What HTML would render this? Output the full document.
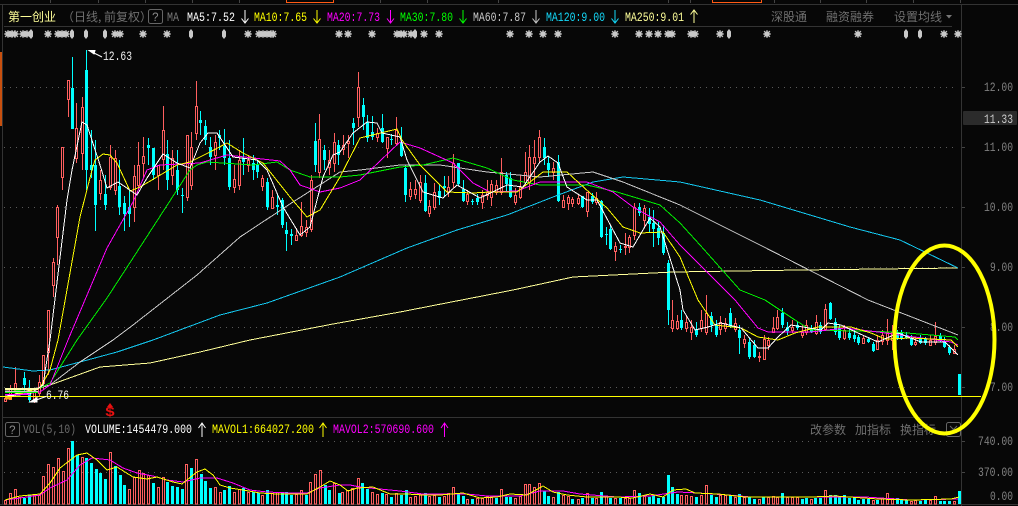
<!DOCTYPE html>
<html><head><meta charset="utf-8"><style>
html,body{margin:0;padding:0;background:#070707;width:1018px;height:506px;overflow:hidden}
svg{display:block}
text{font-family:"Liberation Mono",monospace;font-size:13px}
.c{font-family:"WenQuanYi Zen Hei","Noto Sans CJK SC",sans-serif;font-size:12px;fill:#6f6f6f}
.ax{fill:#808080}
</style></head><body>
<svg width="1018" height="506" viewBox="0 0 1018 506" xmlns="http://www.w3.org/2000/svg">
<defs>
<g id="s"><path d="M-4 0H4M0-4V4M-3-3L3 3M-3 3L3-3" stroke="#c8c8c8" fill="none"/><circle r="2.8" fill="#c8c8c8"/></g>
<g id="d"><path d="M0-5L2-2.5V2.5L0 5L-2 2.5V-2.5z" fill="#c8c8c8"/></g>
</defs>
<rect width="1018" height="506" fill="#070707"/>
<g shape-rendering="crispEdges">
<path d="M0 4.5H1018M4 26.5H952M2 417.5H961M0 504.5H1018" stroke="#333" fill="none"/>
<path d="M50.5 0V3M98.5 0V3M145.5 0V3M192.5 0V3M239.5 0V3M380.5 0V3M427.5 0V3M498.5 0V3M668.5 0V3M690.5 0V3M774.5 0V3M820.5 0V3M866.5 0V3M913.5 0V3M960.5 0V3" stroke="#444"/>
<path d="M286.5 0V2.5H333.5V0M712.5 0V2.5H761.5V0" stroke="#ff5a14" fill="none"/>
<path d="M961.5 4V506M2.5 4V504" stroke="#333"/>
<rect x="0" y="52" width="2" height="74" fill="#c8500f"/>
<path d="M4 87.5H958M4 147.5H958M4 207.5H958M4 267.5H958M4 327.5H958M4 387.5H958M4 441.5H958M4 472.5H958" stroke="#5a5a5a" stroke-dasharray="1 5"/>
<path d="M962 87.5H965M962 147.5H965M962 207.5H965M962 267.5H965M962 327.5H965M962 387.5H965M962 441.5H965M962 472.5H965" stroke="#444"/>

<!-- volume cyan -->
<path stroke="#0ff" stroke-width="3" fill="none" d="M24.5 498V504M29.5 495V504M72.5 441V504M77.5 455V504M86.5 458V504M91.5 463V504M96.5 469V504M100.5 473V504M105.5 479V504M115.5 466V504M120.5 475V504M124.5 485V504M153.5 483V504M167.5 482V504M172.5 486V504M177.5 487V504M182.5 489V504M191.5 468V504M201.5 474V504M205.5 481V504M210.5 488V504M224.5 490V504M229.5 486V504M243.5 488V504M253.5 492V504M258.5 493V504M267.5 490V504M282.5 493V504M286.5 492V504M291.5 495V504M306.5 495V504M325.5 485V504M329.5 490V504M339.5 493V504M362.5 483V504M367.5 489V504M382.5 493V504M391.5 497V504M401.5 495V504M406.5 490V504M425.5 493V504M439.5 497V504M458.5 494V504M463.5 496V504M472.5 499V504M496.5 498V504M506.5 497V504M510.5 497V504M544.5 491V504M548.5 496V504M558.5 492V504M572.5 499V504M582.5 498V504M592.5 498V504M601.5 492V504M610.5 498V504M620.5 498V504M639.5 493V504M649.5 497V504M653.5 495V504M658.5 498V504M663.5 497V504M668.5 475V504M672.5 487V504M677.5 494V504M696.5 497V504M711.5 495V504M716.5 497V504M730.5 495V504M739.5 494V504M749.5 497V504M754.5 499V504M763.5 497V504M782.5 493V504M802.5 499V504M806.5 498V504M815.5 498V504M820.5 498V504M830.5 495V504M835.5 495V504M839.5 497V504M844.5 495V504M849.5 498V504M854.5 498V504M858.5 500V504M863.5 499V504M868.5 499V504M877.5 500V504M897.5 498V504M901.5 500V504M906.5 500V504M920.5 501V504M925.5 500V504M940.5 501V504M944.5 501V504M949.5 501V504M959.5 491V504"/>
<!-- volume red -->
<path stroke="#ff5f5f" fill="none" d="M4.5 500.5h2V504h-2zM9.5 493.5h2V504h-2zM14.5 489.5h2V504h-2zM18.5 497.5h2V504h-2zM33.5 495.5h2V504h-2zM38.5 495.5h2V504h-2zM42.5 476.5h2V504h-2zM47.5 464.5h2V504h-2zM52.5 467.5h2V504h-2zM57.5 458.5h2V504h-2zM62.5 471.5h2V504h-2zM67.5 448.5h2V504h-2zM81.5 457.5h2V504h-2zM109.5 452.5h2V504h-2zM128.5 489.5h2V504h-2zM133.5 477.5h2V504h-2zM138.5 470.5h2V504h-2zM142.5 473.5h2V504h-2zM147.5 475.5h2V504h-2zM157.5 487.5h2V504h-2zM162.5 477.5h2V504h-2zM185.5 464.5h2V504h-2zM195.5 459.5h2V504h-2zM214.5 487.5h2V504h-2zM219.5 492.5h2V504h-2zM233.5 492.5h2V504h-2zM238.5 489.5h2V504h-2zM247.5 492.5h2V504h-2zM261.5 495.5h2V504h-2zM271.5 493.5h2V504h-2zM276.5 492.5h2V504h-2zM295.5 494.5h2V504h-2zM300.5 490.5h2V504h-2zM309.5 482.5h2V504h-2zM314.5 474.5h2V504h-2zM319.5 470.5h2V504h-2zM333.5 483.5h2V504h-2zM341.5 492.5h2V504h-2zM346.5 490.5h2V504h-2zM351.5 488.5h2V504h-2zM357.5 478.5h2V504h-2zM371.5 492.5h2V504h-2zM376.5 494.5h2V504h-2zM385.5 494.5h2V504h-2zM395.5 493.5h2V504h-2zM409.5 497.5h2V504h-2zM414.5 496.5h2V504h-2zM419.5 494.5h2V504h-2zM428.5 496.5h2V504h-2zM433.5 495.5h2V504h-2zM443.5 496.5h2V504h-2zM447.5 493.5h2V504h-2zM452.5 487.5h2V504h-2zM466.5 499.5h2V504h-2zM476.5 498.5h2V504h-2zM481.5 498.5h2V504h-2zM486.5 496.5h2V504h-2zM490.5 496.5h2V504h-2zM500.5 489.5h2V504h-2zM514.5 498.5h2V504h-2zM519.5 496.5h2V504h-2zM524.5 484.5h2V504h-2zM528.5 484.5h2V504h-2zM533.5 487.5h2V504h-2zM538.5 483.5h2V504h-2zM552.5 497.5h2V504h-2zM562.5 495.5h2V504h-2zM567.5 496.5h2V504h-2zM577.5 499.5h2V504h-2zM586.5 493.5h2V504h-2zM595.5 498.5h2V504h-2zM605.5 496.5h2V504h-2zM614.5 498.5h2V504h-2zM624.5 498.5h2V504h-2zM628.5 498.5h2V504h-2zM633.5 490.5h2V504h-2zM643.5 496.5h2V504h-2zM680.5 495.5h2V504h-2zM685.5 495.5h2V504h-2zM690.5 496.5h2V504h-2zM700.5 495.5h2V504h-2zM705.5 485.5h2V504h-2zM719.5 495.5h2V504h-2zM724.5 495.5h2V504h-2zM734.5 497.5h2V504h-2zM743.5 497.5h2V504h-2zM758.5 499.5h2V504h-2zM767.5 497.5h2V504h-2zM772.5 496.5h2V504h-2zM776.5 497.5h2V504h-2zM786.5 497.5h2V504h-2zM791.5 497.5h2V504h-2zM796.5 497.5h2V504h-2zM810.5 499.5h2V504h-2zM824.5 490.5h2V504h-2zM872.5 500.5h2V504h-2zM881.5 498.5h2V504h-2zM886.5 493.5h2V504h-2zM891.5 498.5h2V504h-2zM910.5 501.5h2V504h-2zM914.5 500.5h2V504h-2zM929.5 500.5h2V504h-2zM934.5 496.5h2V504h-2zM953.5 501.5h2V504h-2z"/>

<!-- candle wicks: red -->
<path stroke="#ff5f5f" fill="none" d="M5.5 397V402M10.5 385V400M15.5 367V396M34.5 388V403M39.5 375V396M43.5 355V390M48.5 310V375M53.5 258V297M57.5 205V265M62.5 147V190M68.5 80V117M76.5 103V163M82.5 97V170M100.5 170V200M110.5 145V190M115.5 150V195M134.5 165V222M138.5 142V190M143.5 137V178M158.5 165V190M163.5 106V170M172.5 150V185M187.5 135V201M191.5 132V190M196.5 81V140M215.5 135V170M234.5 165V193M239.5 150V190M248.5 155V172M262.5 175V191M272.5 190V209M296.5 228V241M301.5 202V237M306.5 220V237M311.5 175V232M319.5 114V178M329.5 150V175M334.5 133V172M343.5 135V155M348.5 135V158M358.5 72V127M377.5 128V142M387.5 137V158M396.5 117V145M410.5 182V200M415.5 180V199M420.5 175V203M429.5 200V217M434.5 183V210M448.5 176V197M453.5 154V188M467.5 190V205M482.5 190V209M487.5 180V200M491.5 180V206M496.5 180V195M501.5 158V195M515.5 188V205M520.5 175V199M525.5 152V185M529.5 145V190M534.5 140V185M539.5 130V163M553.5 162V180M563.5 195V208M568.5 195V210M572.5 197V207M578.5 195V205M587.5 192V217M596.5 192V205M615.5 242V261M625.5 233V255M629.5 235V253M634.5 203V240M644.5 205V228M672.5 300V332M677.5 315V330M686.5 315V332M691.5 320V340M701.5 310V332M706.5 295V335M720.5 316V335M725.5 318V332M735.5 318V332M744.5 335V348M759.5 352V362M764.5 335V360M768.5 337V350M773.5 317V333M777.5 310V330M792.5 320V333M802.5 325V338M806.5 320V335M816.5 315V335M825.5 304V331M844.5 325V340M863.5 335V344M877.5 335V350M882.5 330V345M887.5 319V345M892.5 325V350M915.5 337V346M930.5 335V346M935.5 322V345M954.5 345V353"/>
<!-- candle bodies: red -->
<path stroke="#ff5f5f" fill="#070707" d="M4.5 398.5h2v3h-2zM9.5 388.5h2v11h-2zM14.5 383.5h2v7h-2zM33.5 392.5h2v7h-2zM38.5 382.5h2v11h-2zM42.5 355.5h2v28h-2zM47.5 310.5h2v42h-2zM52.5 262.5h2v23h-2zM56.5 207.5h2v30h-2zM61.5 147.5h2v30h-2zM67.5 80.5h2v19h-2zM75.5 128.5h2v30h-2zM81.5 107.5h2v46h-2zM99.5 180.5h2v13h-2zM109.5 157.5h2v30h-2zM114.5 158.5h2v32h-2zM133.5 176.5h2v31h-2zM137.5 165.5h2v20h-2zM142.5 156.5h2v7h-2zM157.5 165.5h2v10h-2zM162.5 130.5h2v29h-2zM171.5 158.5h2v17h-2zM186.5 135.5h2v62h-2zM190.5 147.5h2v38h-2zM195.5 106.5h2v27h-2zM214.5 142.5h2v13h-2zM233.5 179.5h2v8h-2zM238.5 160.5h2v25h-2zM247.5 160.5h2v5h-2zM261.5 178.5h2v8h-2zM271.5 197.5h2v11h-2zM295.5 235.5h2v5h-2zM300.5 226.5h2v9h-2zM305.5 227.5h2v5h-2zM310.5 180.5h2v49h-2zM318.5 139.5h2v33h-2zM328.5 160.5h2v7h-2zM333.5 142.5h2v21h-2zM342.5 145.5h2v4h-2zM347.5 141.5h2v2h-2zM357.5 87.5h2v30h-2zM376.5 133.5h2v4h-2zM386.5 137.5h2v11h-2zM395.5 130.5h2v13h-2zM409.5 189.5h2v7h-2zM414.5 189.5h2v5h-2zM419.5 182.5h2v18h-2zM428.5 206.5h2v7h-2zM433.5 192.5h2v15h-2zM447.5 187.5h2v5h-2zM452.5 163.5h2v19h-2zM466.5 194.5h2v7h-2zM481.5 195.5h2v7h-2zM486.5 192.5h2v3h-2zM490.5 184.5h2v13h-2zM495.5 185.5h2v7h-2zM500.5 172.5h2v20h-2zM514.5 195.5h2v7h-2zM519.5 187.5h2v10h-2zM524.5 172.5h2v10h-2zM528.5 157.5h2v25h-2zM533.5 157.5h2v6h-2zM538.5 137.5h2v20h-2zM552.5 168.5h2v4h-2zM562.5 200.5h2v7h-2zM567.5 197.5h2v6h-2zM571.5 199.5h2v4h-2zM577.5 198.5h2v5h-2zM586.5 192.5h2v19h-2zM595.5 198.5h2v4h-2zM614.5 246.5h2v5h-2zM624.5 246.5h2v1h-2zM628.5 237.5h2v10h-2zM633.5 207.5h2v28h-2zM643.5 208.5h2v12h-2zM671.5 320.5h2v8h-2zM676.5 321.5h2v7h-2zM685.5 322.5h2v6h-2zM690.5 327.5h2v5h-2zM700.5 320.5h2v8h-2zM705.5 313.5h2v19h-2zM719.5 322.5h2v7h-2zM724.5 323.5h2v5h-2zM734.5 323.5h2v6h-2zM743.5 339.5h2v4h-2zM758.5 356.5h2v1h-2zM763.5 339.5h2v20h-2zM767.5 340.5h2v5h-2zM772.5 328.5h2v4h-2zM776.5 317.5h2v11h-2zM791.5 327.5h2v3h-2zM801.5 332.5h2v3h-2zM805.5 325.5h2v7h-2zM815.5 322.5h2v11h-2zM824.5 309.5h2v20h-2zM843.5 330.5h2v8h-2zM862.5 338.5h2v5h-2zM876.5 340.5h2v9h-2zM881.5 335.5h2v6h-2zM886.5 332.5h2v8h-2zM891.5 332.5h2v8h-2zM914.5 342.5h2v2h-2zM929.5 340.5h2v5h-2zM934.5 336.5h2v6h-2zM953.5 349.5h2v4h-2z"/>
<!-- cyan wicks -->
<path stroke="#0ff" fill="none" d="M24.5 372V395M29.5 380V402M72.5 57V129M86.5 50V190M91.5 130V178M95.5 140V231M105.5 175V210M119.5 160V215M124.5 196V231M129.5 190V227M148.5 138V165M153.5 148V180M167.5 140V190M177.5 150V195M182.5 188V213M200.5 111V135M205.5 120V145M210.5 137V165M219.5 130V150M224.5 129V165M229.5 140V190M243.5 138V175M253.5 155V180M257.5 160V178M267.5 178V210M277.5 195V215M282.5 198V228M286.5 222V251M291.5 229V245M315.5 123V172M324.5 145V170M338.5 140V165M353.5 118V145M363.5 98V130M367.5 115V142M372.5 116V140M382.5 114V143M391.5 134V145M401.5 127V157M405.5 165V202M425.5 175V212M439.5 185V205M444.5 176V197M458.5 163V186M463.5 180V202M472.5 199V205M477.5 194V205M506.5 172V192M510.5 172V198M544.5 138V165M548.5 157V177M558.5 155V202M582.5 196V208M592.5 193V204M601.5 200V238M606.5 227V245M610.5 225V250M620.5 245V253M639.5 203V216M649.5 208V233M653.5 210V247M658.5 222V245M663.5 225V255M668.5 260V325M681.5 310V330M696.5 322V337M711.5 312V332M716.5 320V337M730.5 308V328M739.5 325V354M749.5 338V359M754.5 340V358M782.5 308V328M787.5 322V335M797.5 322V330M811.5 325V333M820.5 322V334M830.5 302V320M835.5 318V335M839.5 325V340M849.5 328V340M854.5 330V342M858.5 335V345M868.5 337V343M873.5 342V352M897.5 330V340M901.5 330V340M906.5 332V339M911.5 335V346M920.5 335V344M925.5 337V345M940.5 333V342M944.5 337V348M949.5 345V355"/>
<!-- cyan bodies -->
<path stroke="#0ff" stroke-width="3" fill="none" d="M24.5 378V385M29.5 390V400M72.5 88V129M86.5 70V170M91.5 165V170M95.5 165V205M105.5 194V205M119.5 186V207M124.5 203V214M129.5 207V214M148.5 145V148M153.5 148V175M167.5 154V180M177.5 170V190M182.5 195V196M200.5 120V123M205.5 126V140M210.5 147V157M219.5 135V138M224.5 146V158M229.5 158V187M243.5 158V162M253.5 163V170M257.5 165V172M267.5 182V207M277.5 205V207M282.5 200V225M286.5 230V234M291.5 234V236M315.5 141V165M324.5 150V160M338.5 145V155M353.5 123V128M363.5 105V117M367.5 122V138M372.5 132V137M382.5 128V142M391.5 139V140M401.5 142V156M405.5 168V195M425.5 183V211M439.5 191V198M444.5 186V188M458.5 163V184M463.5 189V201M472.5 201V202M477.5 198V202M506.5 175V184M510.5 178V197M544.5 147V158M548.5 163V170M558.5 162V201M582.5 196V207M592.5 196V202M601.5 201V237M606.5 234V235M610.5 229V249M620.5 249V250M639.5 207V213M649.5 217V224M653.5 223V229M658.5 228V238M663.5 233V253M668.5 263V310M681.5 320V328M696.5 329V335M711.5 316V325M716.5 325V335M730.5 313V327M739.5 330V338M749.5 342V357M754.5 345V357M782.5 313V325M787.5 327V331M797.5 325V328M811.5 328V332M820.5 325V332M830.5 303V319M835.5 322V332M839.5 328V338M849.5 333V338M854.5 335V339M858.5 337V343M868.5 339V342M873.5 344V351M897.5 332V339M901.5 333V338M906.5 335V338M911.5 338V345M920.5 338V343M925.5 339V343M940.5 336V339M944.5 341V347M949.5 347V353M959.5 374V395"/>

<!-- MAs -->
<g fill="none">
<polyline stroke="#ffff99" points="5,399 15,394 50,385 100,367 150,363 200,352 250,340 333,324 400,312 513,290 573,277 673,272 800,270 958,268"/>
<polyline stroke="#14c8f0" points="3,367 33,371 50,370 80,362 117,352 153,340 220,315 267,303 340,277 407,248 457,230 507,215 553,197 593,182 623,177 680,182 760,200 850,227 900,240 958,268"/>
<polyline stroke="#c8c8c8" points="5,390 40,388 50,385 80,362 113,340 133,325 197,275 240,237 293,202 340,172 360,170 400,165 440,165 487,172 540,177 593,172 623,182 680,205 760,245 868,300 958,335"/>
<polyline stroke="#00f000" points="5,392 40,388 50,383 77,340 107,298 133,258 177,190 190,170 197,165 207,162 253,165 277,162 290,170 310,177 340,177 360,175 400,167 423,165 453,158 487,168 513,180 540,185 587,185 617,192 660,205 680,223 700,245 740,290 765,300 795,320 811,330 895,332 955,337 958,340"/>
<polyline stroke="#f0f" points="5,396 40,392 50,385 68,340 107,248 133,202 147,170 160,165 200,163 227,155 280,161 290,170 300,185 320,192 340,188 360,180 400,142 420,148 453,163 473,183 490,192 517,191 540,182 587,182 613,192 633,207 660,222 680,245 735,300 758,328 768,332 811,332 845,328 878,332 951,342 958,345"/>
<polyline stroke="#ff0" points="5,398 40,388 50,370 58,340 80,217 92,170 95,160 103,154 110,155 117,163 130,191 140,187 157,177 177,165 190,162 210,152 227,143 243,153 263,163 290,197 307,217 320,210 340,177 360,138 397,129 402,140 420,165 447,192 473,193 490,192 517,192 543,172 567,172 590,193 607,208 623,227 640,233 663,232 680,257 698,300 715,325 741,328 758,337 778,340 795,333 818,327 851,327 871,333 885,339 911,338 951,340 958,347"/>
<polyline stroke="#fff" points="5,396 30,394 43,385 50,340 67,200 72,170 82,122 87,125 100,165 107,188 118,182 137,195 147,178 163,154 177,163 190,168 200,143 208,133 217,133 233,157 257,160 267,170 283,207 300,235 310,227 323,177 333,155 340,152 353,133 367,122 377,123 382,133 400,137 407,160 423,192 443,198 457,185 480,198 507,185 523,187 540,162 548,156 558,163 567,187 587,200 597,200 620,243 633,247 650,218 660,227 680,290 683,310 695,330 708,327 721,323 741,328 758,348 768,348 778,337 791,325 821,330 828,323 841,325 858,333 878,342 898,333 921,342 945,342 958,355"/>
<polyline stroke="#f0f" points="5,500 20,498 40,495 50,488 67,480 80,465 92,458 110,460 123,468 137,473 153,476 167,480 183,482 200,478 217,478 233,483 250,490 267,492 290,493 307,493 320,488 340,485 350,485 360,487 380,489 400,491 423,494 467,494 487,496 520,496 540,491 563,491 580,494 617,497 650,496 678,492 698,493 728,495 751,497 811,497 865,497 911,500 958,499"/>
<polyline stroke="#ff0" points="5,500 20,496 40,494 50,483 60,468 77,455 87,453 97,460 107,470 117,467 133,477 147,479 157,477 173,482 182,484 197,472 205,469 213,475 220,485 230,488 243,490 260,493 277,494 307,494 320,487 330,481 340,485 348,491 357,488 373,487 390,494 407,494 423,495 440,495 463,493 480,498 497,497 510,494 527,495 543,486 553,492 567,495 587,497 617,497 633,498 650,494 663,497 673,490 686,489 695,493 718,494 745,497 778,497 811,497 835,496 878,499 911,500 951,499 959,497"/>
</g>
<!-- start cluster -->
<path fill="none" d="M5 389H38" stroke="#ffffaa" stroke-width="2"/>
<path fill="none" d="M5 391.500H38" stroke="#c8c8c8"/>
<path fill="none" d="M5 392.500H38" stroke="#0f0"/>
<path fill="none" d="M5 394.500H30" stroke="#f0f"/>
<path fill="none" d="M5 398H12" stroke="#ffa020" stroke-width="3"/>
<!-- low line -->
<path d="M0 396.500H981" stroke="#ff0"/>
</g>

<!-- markers -->
<g>
<use href="#s" x="8" y="34"/><use href="#s" x="12" y="34"/><use href="#s" x="15" y="34"/><use href="#s" x="23" y="34"/><use href="#s" x="27" y="34"/><use href="#d" x="31" y="34"/><use href="#s" x="48" y="34"/><use href="#s" x="58" y="34"/><use href="#s" x="62" y="34"/><use href="#s" x="66" y="34"/><use href="#d" x="72" y="34"/><use href="#d" x="86" y="34"/><use href="#d" x="105" y="34"/><use href="#s" x="115" y="34"/><use href="#s" x="120" y="34"/><use href="#s" x="143" y="34"/><use href="#s" x="167" y="34"/><use href="#d" x="191" y="34"/><use href="#d" x="224" y="34"/><use href="#s" x="248" y="34"/><use href="#s" x="259" y="34"/><use href="#s" x="263" y="34"/><use href="#s" x="267" y="34"/><use href="#s" x="271" y="34"/><use href="#s" x="273" y="34"/><use href="#s" x="339" y="34"/><use href="#s" x="348" y="34"/><use href="#s" x="372" y="34"/><use href="#s" x="397" y="34"/><use href="#s" x="401" y="34"/><use href="#s" x="404" y="34"/><use href="#s" x="411" y="34"/><use href="#d" x="415" y="34"/><use href="#s" x="424" y="34"/><use href="#s" x="439" y="34"/><use href="#s" x="510" y="34"/><use href="#s" x="529" y="34"/><use href="#s" x="543" y="34"/><use href="#s" x="558" y="34"/><use href="#s" x="615" y="34"/><use href="#s" x="639" y="34"/><use href="#s" x="649" y="34"/><use href="#s" x="658" y="34"/><use href="#s" x="668" y="34"/><use href="#s" x="672" y="34"/><use href="#s" x="691" y="34"/><use href="#s" x="695" y="34"/><use href="#s" x="720" y="34"/><use href="#d" x="729" y="34"/><use href="#s" x="767" y="34"/><use href="#s" x="858" y="34"/><use href="#d" x="906" y="34"/><use href="#d" x="920" y="34"/><use href="#s" x="944" y="34"/><use href="#s" x="958" y="34"/>
</g>

<!-- header -->
<text class="c" x="8" y="21" style="fill:#ffff99">第一创业</text>
<text class="c" x="62" y="21">（日线, 前复权）</text>
<rect x="148.5" y="9.5" width="14" height="14" rx="2" fill="none" stroke="#666"/>
<text x="152" y="21" textLength="7" lengthAdjust="spacingAndGlyphs" style="fill:#888">?</text>
<text x="167" y="21" textLength="12" lengthAdjust="spacingAndGlyphs" style="fill:#777">MA</text>
<text x="187" y="21" textLength="48" lengthAdjust="spacingAndGlyphs" style="fill:#fff">MA5:7.52</text>
<path d="M245 10V23M241.5 18.5L245 23L248.5 18.5" stroke="#fff" fill="none"/>
<text x="254" y="21" textLength="53" lengthAdjust="spacingAndGlyphs" style="fill:#ff0">MA10:7.65</text>
<path d="M317 10V23M313.5 18.5L317 23L320.5 18.5" stroke="#ff0" fill="none"/>
<text x="327" y="21" textLength="53" lengthAdjust="spacingAndGlyphs" style="fill:#f0f">MA20:7.73</text>
<path d="M390.500 10V23M387 18.5L390.500 23L394 18.5" stroke="#f0f" fill="none"/>
<text x="400" y="21" textLength="53" lengthAdjust="spacingAndGlyphs" style="fill:#0f0">MA30:7.80</text>
<path d="M463 10V23M459.500 18.5L463 23L466.500 18.5" stroke="#0f0" fill="none"/>
<text x="473" y="21" textLength="53" lengthAdjust="spacingAndGlyphs" style="fill:#c8c8c8">MA60:7.87</text>
<path d="M536 10V23M532.500 18.5L536 23L539.500 18.5" stroke="#c8c8c8" fill="none"/>
<text x="546" y="21" textLength="59" lengthAdjust="spacingAndGlyphs" style="fill:#14d8f8">MA120:9.00</text>
<path d="M615 10V23M611.500 18.5L615 23L618.500 18.5" stroke="#14d8f8" fill="none"/>
<text x="625" y="21" textLength="59" lengthAdjust="spacingAndGlyphs" style="fill:#ffff99">MA250:9.01</text>
<path d="M694 10V23M690.500 14.5L694 10L697.500 14.5" stroke="#ffff99" fill="none"/>
<text class="c" x="771" y="21">深股通</text>
<text class="c" x="826" y="21">融资融券</text>
<text class="c" x="894" y="21">设置均线</text>
<path d="M946 15H952L949 18.500z" fill="#777"/>

<!-- annotations -->
<path d="M89 50.500L102 57M89 50.500L95 50.500L94 54z" stroke="#fff" fill="#fff"/>
<text x="103" y="60" textLength="29" lengthAdjust="spacingAndGlyphs" style="fill:#eee">12.63</text>
<path d="M46 396.500L32 401.500M30 402L37 397.500L37 402z" stroke="#fff" fill="#fff"/>
<text x="46" y="399" textLength="23" lengthAdjust="spacingAndGlyphs" style="fill:#eee">6.76</text>
<path d="M110 403L113 407H107z" fill="#e81010"/>
<text x="105" y="416" textLength="10" lengthAdjust="spacingAndGlyphs" style="fill:#e81010;font-weight:bold;font-size:14px">$</text>

<!-- axis -->
<g class="ax">
<text x="984" y="91" textLength="29" lengthAdjust="spacingAndGlyphs">12.00</text>
<rect x="963" y="111" width="54" height="14" rx="1" fill="#2b2b2b"/>
<text x="984" y="123" textLength="29" lengthAdjust="spacingAndGlyphs" style="fill:#ccc">11.33</text>
<text x="984" y="151" textLength="29" lengthAdjust="spacingAndGlyphs">11.00</text>
<text x="984" y="211" textLength="29" lengthAdjust="spacingAndGlyphs">10.00</text>
<text x="990" y="271" textLength="23" lengthAdjust="spacingAndGlyphs">9.00</text>
<text x="990" y="331" textLength="23" lengthAdjust="spacingAndGlyphs">8.00</text>
<text x="990" y="391" textLength="23" lengthAdjust="spacingAndGlyphs">7.00</text>
<text x="978" y="445" textLength="35" lengthAdjust="spacingAndGlyphs">740.00</text>
<text x="978" y="476" textLength="35" lengthAdjust="spacingAndGlyphs">370.00</text>
<text x="990" y="500" textLength="23" lengthAdjust="spacingAndGlyphs">0.00</text>
</g>

<!-- volume header -->
<rect x="5.500" y="422.500" width="14" height="14" rx="2" fill="none" stroke="#666"/>
<text x="9" y="434" textLength="7" lengthAdjust="spacingAndGlyphs" style="fill:#888">?</text>
<text x="23" y="433" textLength="53" lengthAdjust="spacingAndGlyphs" style="fill:#6a6a6a">VOL(5,10)</text>
<text x="85" y="433" textLength="107" lengthAdjust="spacingAndGlyphs" style="fill:#fff">VOLUME:1454479.000</text>
<path d="M202 423V437M198.500 428L202 423L205.500 428" stroke="#fff" fill="none"/>
<text x="212" y="433" textLength="102" lengthAdjust="spacingAndGlyphs" style="fill:#ff0">MAVOL1:664027.200</text>
<path d="M323 423V437M319.500 428L323 423L326.500 428" stroke="#ff0" fill="none"/>
<text x="333" y="433" textLength="101" lengthAdjust="spacingAndGlyphs" style="fill:#f0f">MAVOL2:570690.600</text>
<path d="M444.500 423V437M441 428L444.500 423L448 428" stroke="#f0f" fill="none"/>
<text class="c" x="810" y="434">改参数</text>
<text class="c" x="855" y="434">加指标</text>
<text class="c" x="900" y="434">换指标</text>
<rect x="946.500" y="422.500" width="14" height="14" rx="2" fill="none" stroke="#666"/>
<path d="M950 426L957 433M957 426L950 433" stroke="#666"/>

<!-- circle -->
<ellipse cx="944.500" cy="339.500" rx="50" ry="94" fill="none" stroke="#ffff00" stroke-width="4"/>
</svg>
</body></html>
